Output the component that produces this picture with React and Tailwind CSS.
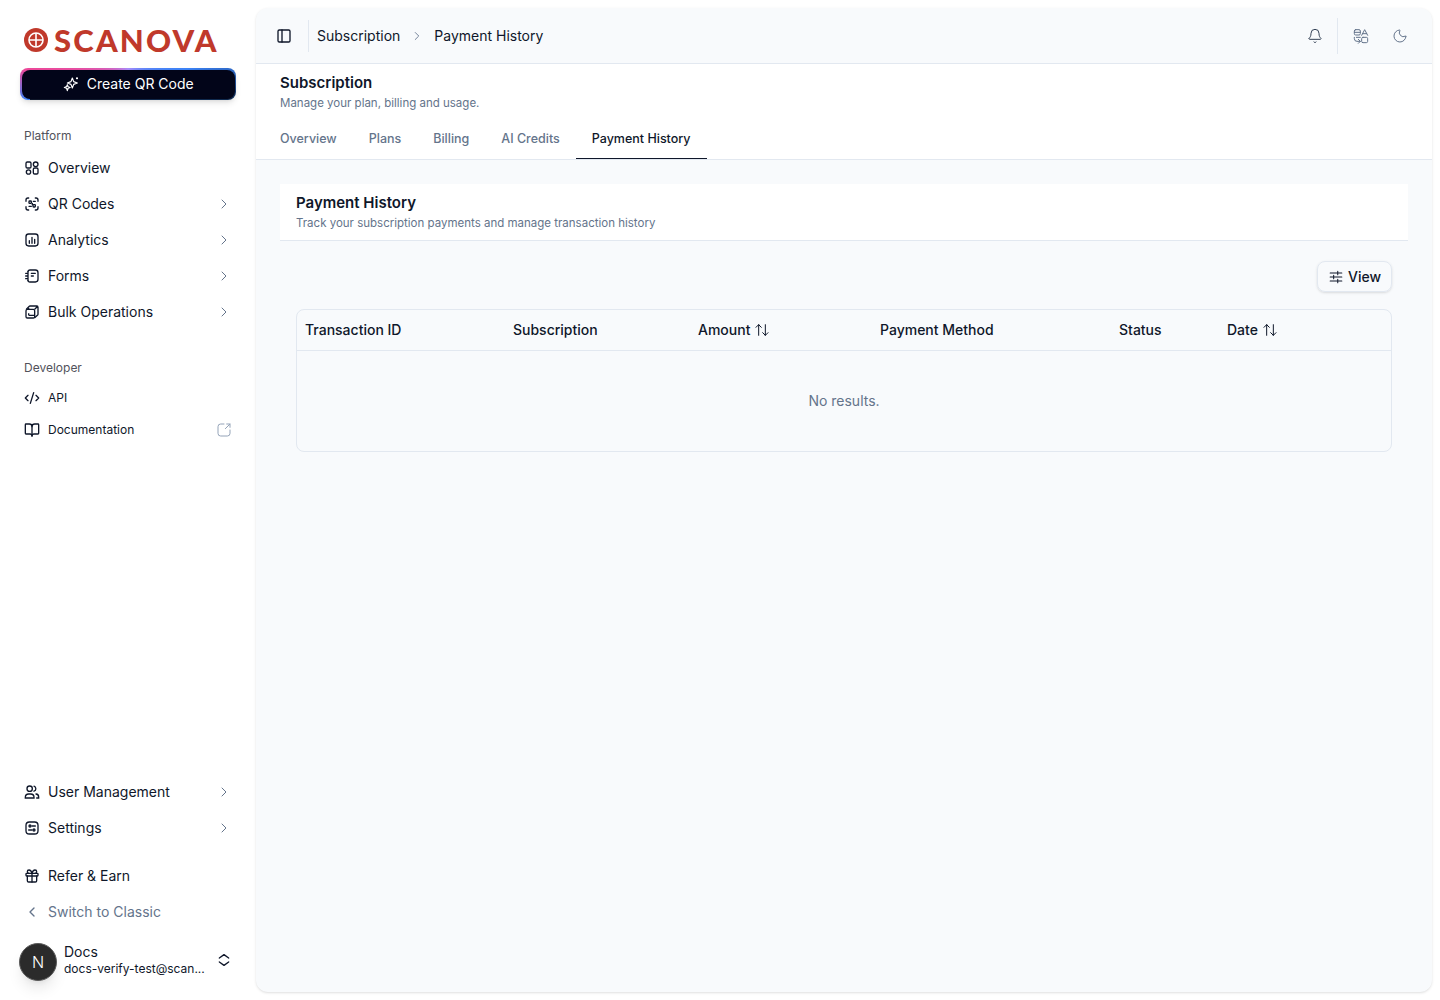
import {
  ArrowUpDown,
  Bell,
  BookOpen,
  ChevronLeft,
  ChevronRight,
  CodeXml,
  Gift,
  Moon,
  PanelLeft,
} from "lucide-react";

const OverviewIcon = ({ className }) => (
  <svg viewBox="0 0 24 24" fill="none" stroke="currentColor" strokeWidth="2" className={className}>
    <rect x="3" y="3" width="7.5" height="9" rx="2" />
    <circle cx="17.5" cy="6.5" r="3.5" />
    <circle cx="6.75" cy="18" r="3.25" />
    <rect x="14" y="12" width="7" height="9" rx="2" />
  </svg>
);

const QrIcon = ({ className }) => (
  <svg viewBox="0 0 24 24" fill="none" stroke="currentColor" strokeWidth="2" strokeLinecap="round" className={className}>
    <path d="M3 8V6a3 3 0 0 1 3-3h1M17 3h1a3 3 0 0 1 3 3v2M21 16v2a3 3 0 0 1-3 3h-1M7 21H6a3 3 0 0 1-3-3v-2" />
    <rect x="7.5" y="7.5" width="3.5" height="3.5" rx="1" />
    <rect x="13.5" y="13" width="3.5" height="3.5" rx="1" />
    <path d="M14 8h3M7.5 15.5H11M12.5 11v2" />
  </svg>
);

const AnalyticsIcon = ({ className }) => (
  <svg viewBox="0 0 24 24" fill="none" stroke="currentColor" strokeWidth="2" strokeLinecap="round" className={className}>
    <rect x="3" y="3" width="18" height="18" rx="4" />
    <path d="M8 17v-4M12 17V8M16 17v-6" />
  </svg>
);

const FormsIcon = ({ className }) => (
  <svg viewBox="0 0 24 24" fill="none" stroke="currentColor" strokeWidth="2" strokeLinecap="round" className={className}>
    <path d="M6 5a3 3 0 0 1 3-2h8a4 4 0 0 1 4 4v10a4 4 0 0 1-4 4H9a3 3 0 0 1-3-2" />
    <path d="M6 5v14M2.5 8H6M2.5 12H6M2.5 16H6M11 8h6M11 12h3" />
  </svg>
);

const BulkIcon = ({ className }) => (
  <svg viewBox="0 0 24 24" fill="none" stroke="currentColor" strokeWidth="2" strokeLinejoin="round" className={className}>
    <rect x="3" y="8" width="13" height="13" rx="2" />
    <path d="M3.5 8 8 3.5a2 2 0 0 1 1-.5h10a2 2 0 0 1 2 2v10a2 2 0 0 1-.5 1.5L16 20.5M16 8l5-5M7 8V6M7 14v3M7 17h9" />
  </svg>
);

const UsersIcon = ({ className }) => (
  <svg viewBox="0 0 24 24" fill="none" stroke="currentColor" strokeWidth="2" strokeLinecap="round" className={className}>
    <circle cx="8.5" cy="7" r="4" />
    <path d="M15 3.2a4 4 0 0 1 0 7.6" />
    <path d="M7 15h3a5 5 0 0 1 5 5v1H2v-1a5 5 0 0 1 5-5z" />
    <path d="M18 15a4.5 4.5 0 0 1 4 4.5V21h-3" />
  </svg>
);

const SettingsIcon = ({ className }) => (
  <svg viewBox="0 0 24 24" fill="none" stroke="currentColor" strokeWidth="2" strokeLinecap="round" className={className}>
    <rect x="3" y="3" width="18" height="18" rx="5" />
    <circle cx="9" cy="9" r="1.5" />
    <circle cx="15" cy="15" r="1.5" />
    <path d="M12 9h5M7 15h5" />
  </svg>
);

const TranslateIcon = ({ className }) => (
  <svg viewBox="0 0 24 24" fill="none" stroke="currentColor" strokeWidth="1.5" strokeLinecap="round" strokeLinejoin="round" className={className}>
    <rect x="2" y="2.5" width="9" height="8" rx="2" />
    <rect x="13" y="14" width="9" height="8" rx="2" />
    <path d="M2 6.5h9M13 11l4.5-8.5L22 11M14.5 8.5h6M2 14v2a4 4 0 0 0 4 4h5M8 17l3 3-3 3M11 14H5" />
  </svg>
);

const SlidersIcon = ({ className }) => (
  <svg viewBox="0 0 24 24" fill="none" stroke="currentColor" strokeWidth="1.75" strokeLinecap="round" className={className}>
    <path d="M2 5h20M2 12h20M2 19h20M15 2v6M8 9v6M15 16v6" />
  </svg>
);

const WandIcon = ({ className }) => (
  <svg viewBox="0 0 24 24" fill="none" stroke="currentColor" strokeWidth="1.75" strokeLinejoin="round" className={className}>
    <path d="M14 3l2 5.5 5.5 2-5.5 2-2 5.5-2-5.5-5.5-2 5.5-2z" />
    <path d="M6.5 13l1.2 3 3 1.2-3 1.2-1.2 3.6-1.2-3.6-3.3-1.2 3.3-1.2z" />
    <path d="M21 2v3M19.5 3.5h3" />
  </svg>
);

const ExternalIcon = ({ className }) => (
  <svg viewBox="0 0 24 24" fill="none" stroke="currentColor" strokeWidth="1.5" strokeLinecap="round" strokeLinejoin="round" className={className}>
    <path d="M12 3H7a4 4 0 0 0-4 4v10a4 4 0 0 0 4 4h10a4 4 0 0 0 4-4v-5" />
    <path d="M14 10l7-7M16 3h5v5" />
  </svg>
);

const UpDownIcon = ({ className }) => (
  <svg viewBox="0 0 24 24" fill="none" stroke="currentColor" strokeWidth="2" strokeLinecap="round" strokeLinejoin="round" className={className}>
    <path d="M5 9l7-5 7 5M5 15l7 5 7-5" />
  </svg>
);

const Logo = () => (
  <div className="flex items-center gap-[6px] pl-[24px] h-[24px]">
    <svg viewBox="0 0 24 24" className="w-[24px] h-[24px]">
      <circle cx="12" cy="12" r="12" fill="#c0392b" />
      <circle cx="12" cy="12" r="7" fill="none" stroke="#fff" strokeWidth="1.6" />
      <path d="M12 5v14M5 12h14" stroke="#fff" strokeWidth="1.6" />
    </svg>
    <span className="font-['Lato',sans-serif] font-black text-[31px] leading-none tracking-[2.2px] text-[#c0392b]">
      SCANOVA
    </span>
  </div>
);

const NavItem = ({ icon: Icon, label, chevron, small, muted }) => (
  <div
    className={`flex items-center gap-2 px-[8px] ${small ? "h-[32px] text-xs" : "h-[36px] text-sm"} ${
      muted ? "text-[#64748b]" : "text-[#0f172a]"
    }`}
  >
    <Icon className="w-4 h-4 shrink-0" />
    <span className="flex-1 truncate">{label}</span>
    {chevron && <ChevronRight className="w-4 h-4 text-[#64748b]" strokeWidth={1.5} />}
  </div>
);

const columns = [
  { label: "Transaction ID", w: "w-[208px]" },
  { label: "Subscription", w: "w-[185px]" },
  { label: "Amount", w: "w-[182px]", sort: true },
  { label: "Payment Method", w: "w-[239px]" },
  { label: "Status", w: "w-[108px]" },
  { label: "Date", w: "flex-1", sort: true },
];

const tabs = ["Overview", "Plans", "Billing", "AI Credits", "Payment History"];

const App = () => {
  return (
    <div className="flex h-[1000px] bg-white font-['Inter',sans-serif] overflow-hidden">
      <aside className="w-[256px] shrink-0 flex flex-col">
        <div className="pt-[28px]">
          <Logo />
        </div>
        <div className="px-[20px] mt-[16px]">
          <button className="w-[216px] h-[32px] rounded-lg bg-[conic-gradient(from_261deg,#3b82f6_0deg,#ec4899_17deg,#a78bfa_100deg,#3b82f6_175deg,#0f2a4f_197deg,#0f172a_360deg)] pt-[1.5px] pl-[1.5px] pr-[1px] pb-[1px] shadow-md">
            <span className="flex items-center justify-center gap-2 w-full h-full rounded-lg bg-[#020519] text-white text-sm">
              <WandIcon className="w-4 h-4" />
              Create QR Code
            </span>
          </button>
        </div>

        <div className="px-[16px] mt-[22px]">
          <div className="h-[28px] flex items-center px-[8px] text-xs text-[#52525b]">Platform</div>
          <NavItem icon={OverviewIcon} label="Overview" />
          <NavItem icon={QrIcon} label="QR Codes" chevron />
          <NavItem icon={AnalyticsIcon} label="Analytics" chevron />
          <NavItem icon={FormsIcon} label="Forms" chevron />
          <NavItem icon={BulkIcon} label="Bulk Operations" chevron />
        </div>

        <div className="px-[16px] mt-[23px]">
          <div className="h-[29px] flex items-center px-[8px] text-xs text-[#52525b]">Developer</div>
          <NavItem icon={CodeXml} label="API" small />
          <div className="flex items-center gap-2 px-[8px] h-[32px] text-xs text-[#0f172a]">
            <BookOpen className="w-4 h-4 shrink-0" />
            <span className="flex-1">Documentation</span>
            <ExternalIcon className="w-4 h-4 text-[#94a3b8]" />
          </div>
        </div>

        <div className="mt-auto px-[16px]">
          <NavItem icon={UsersIcon} label="User Management" chevron />
          <NavItem icon={SettingsIcon} label="Settings" chevron />
          <div className="mt-[12px]">
            <NavItem icon={Gift} label="Refer & Earn" />
            <NavItem icon={ChevronLeft} label="Switch to Classic" muted />
          </div>
        </div>

        <div className="flex pl-[19px] pr-[24px] pt-[13px] pb-[19px]">
          <div className="w-[38px] h-[38px] shrink-0 rounded-full bg-[#2b2b2b] border border-[#5a5a5a] flex items-center justify-center text-white text-base font-light shadow-lg">
            N
          </div>
          <div className="ml-[7px] flex-1 min-w-0 -mt-[1px] h-[34px]">
            <div className="text-sm leading-[20px] text-[#0f172a]">Docs</div>
            <div className="text-xs leading-[14px] text-[#0f172a] truncate">docs-verify-test@scan...</div>
          </div>
          <UpDownIcon className="w-4 h-4 mt-[9px] text-[#0f172a]" />
        </div>
      </aside>

      <main className="my-[8px] mr-[8px] flex-1 bg-[#f8fafc] rounded-xl shadow-sm flex flex-col overflow-hidden">
        <header className="h-[56px] shrink-0 flex items-center border-b border-[#e2e8f0] pl-[20px] pr-[24px]">
          <PanelLeft className="w-4 h-4 text-[#0f172a]" />
          <div className="w-px h-[32px] bg-[#e2e8f0] ml-[16px] mr-[8px]" />
          <span className="text-sm text-[#0f172a]">Subscription</span>
          <ChevronRight className="w-[14px] h-[14px] mx-[10px] text-[#64748b]" strokeWidth={1.5} />
          <span className="text-sm text-[#0f172a]">Payment History</span>
          <div className="ml-auto flex items-center">
            <Bell className="w-4 h-4 text-[#334155]" strokeWidth={1.5} />
            <div className="w-px h-[36px] bg-[#e2e8f0] ml-[14px] mr-[15px]" />
            <TranslateIcon className="w-4 h-4 text-[#64748b]" />
            <Moon className="w-4 h-4 ml-[23px] text-[#64748b]" strokeWidth={1.5} />
          </div>
        </header>

        <section className="bg-white border-b border-[#e2e8f0] h-[96px] shrink-0 flex flex-col">
          <div className="pl-[24px] pt-[9px]">
            <h1 className="text-[15px] leading-[20px] font-semibold text-[#0f172a]">Subscription</h1>
            <p className="text-[11.5px] leading-[16px] mt-[2px] text-[#64748b]">Manage your plan, billing and usage.</p>
          </div>
          <nav className="flex pl-[8px] mt-auto">
            {tabs.map((tab) => (
              <div
                key={tab}
                className={`h-[38px] px-[16px] pb-[1px] flex items-center border-b text-[12.5px] font-medium ${
                  tab === "Payment History" ? "text-[#0f172a] border-[#0f172a]" : "text-[#64748b] border-transparent"
                }`}
              >
                {tab}
              </div>
            ))}
          </nav>
        </section>

        <section className="p-[24px] flex-1">
          <div className="bg-white border-b border-[#e2e8f0] h-[57px] px-[16px] pt-[9px]">
            <h2 className="text-[15px] leading-[20px] font-semibold text-[#0f172a]">Payment History</h2>
            <p className="text-[11.5px] leading-[16px] mt-[2px] text-[#64748b]">
              Track your subscription payments and manage transaction history
            </p>
          </div>

          <div className="px-[16px]">
            <div className="flex justify-end mt-[20px] mb-[17px]">
              <button className="h-[31px] w-[75px] pl-[1px] rounded-lg border border-[#e2e8f0] shadow-sm flex items-center justify-center gap-[5px] text-sm font-medium text-[#0f172a]">
                <SlidersIcon className="w-[14px] h-[14px]" />
                View
              </button>
            </div>

            <div className="border border-[#e2e8f0] rounded-lg h-[143px]">
              <div className="flex h-[41px] items-center border-b border-[#e2e8f0] px-[8px]">
                {columns.map((col) => (
                  <div key={col.label} className={`${col.w} flex items-center gap-[4px] text-sm font-medium text-[#0f172a]`}>
                    {col.label}
                    {col.sort && <ArrowUpDown className="w-4 h-4" strokeWidth={1.5} />}
                  </div>
                ))}
              </div>
              <div className="h-[100px] flex items-center justify-center text-sm text-[#64748b]">No results.</div>
            </div>
          </div>
        </section>
      </main>
    </div>
  );
};

export default App;
